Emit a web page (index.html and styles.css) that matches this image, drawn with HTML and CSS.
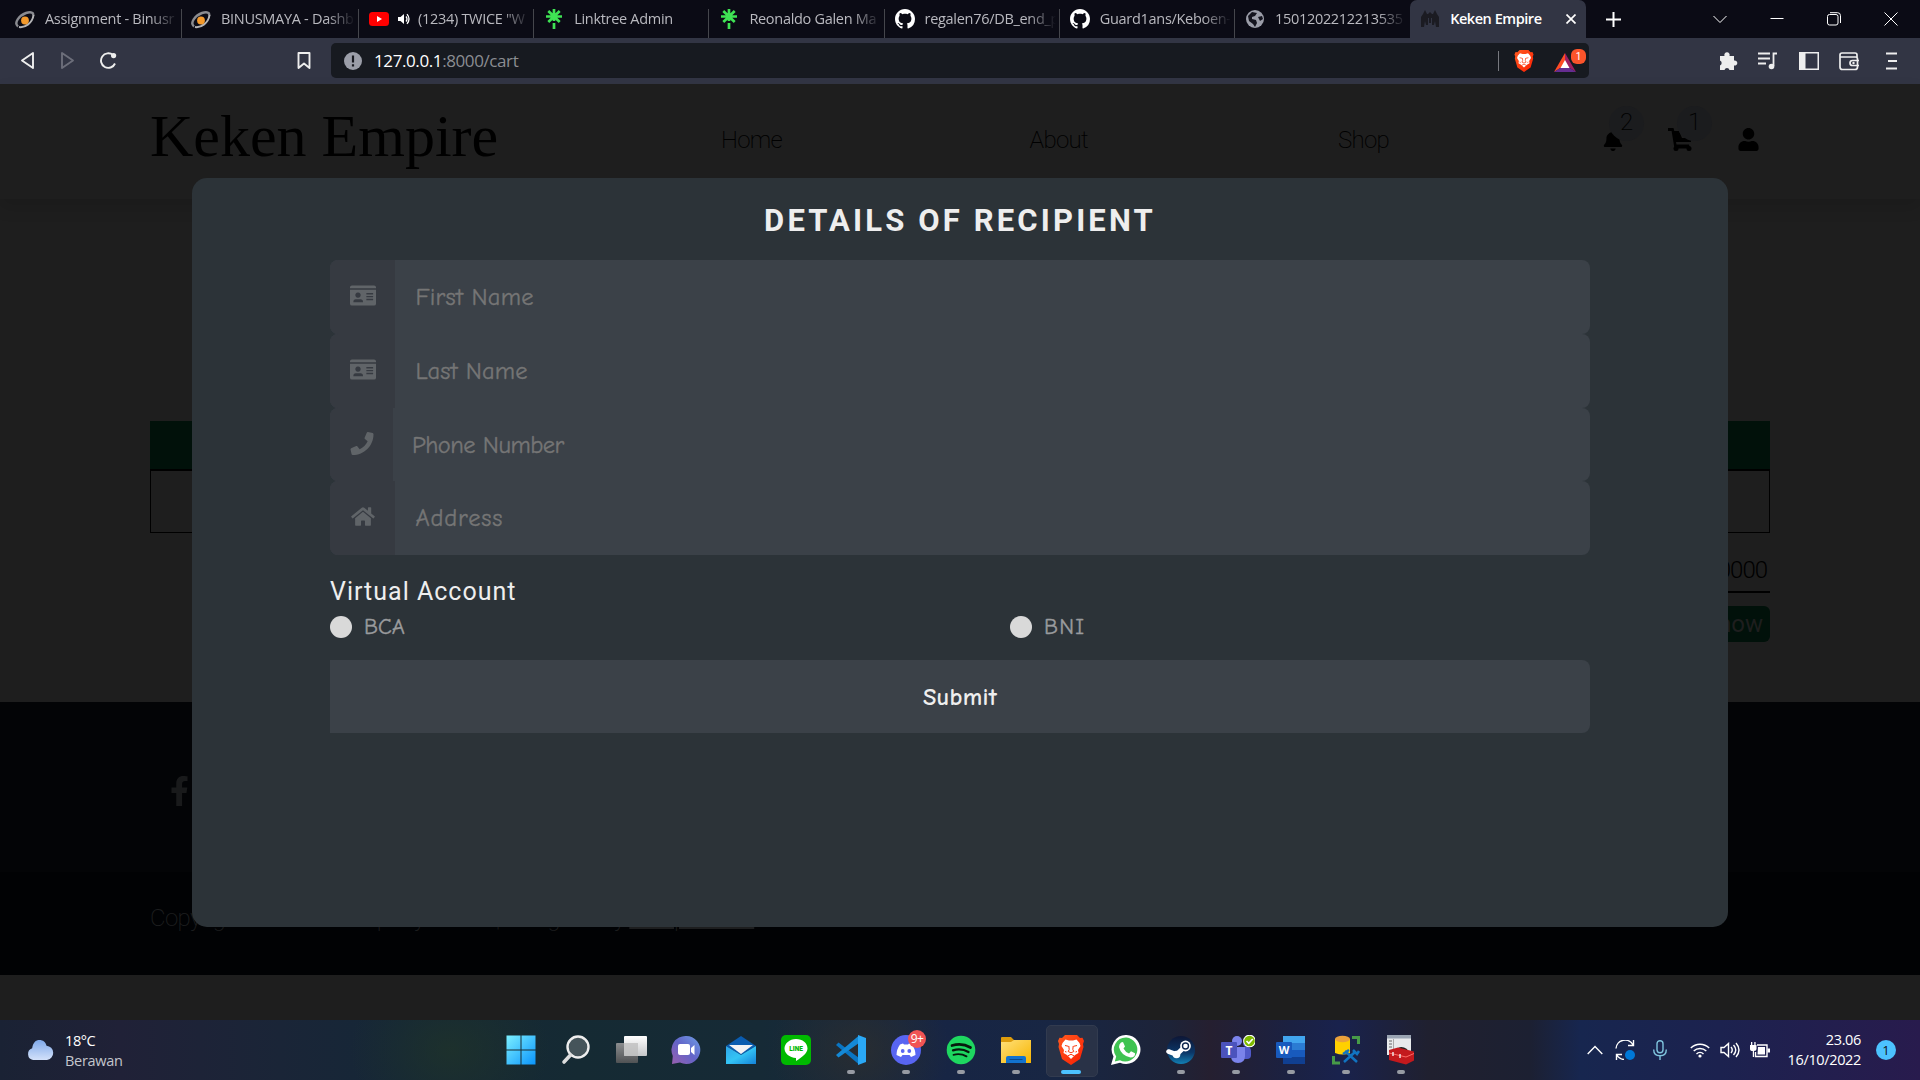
FILE: index.html
```html
<!DOCTYPE html>
<html lang="en">
<head>
<meta charset="utf-8">
<title>Keken Empire</title>
<link rel="stylesheet" href="styles.css">
</head>
<body>
<svg width="0" height="0" class="defs" aria-hidden="true">
  <defs>
    <linearGradient id="gWin" x1="0" y1="0" x2="1" y2="1"><stop offset="0" stop-color="#7cf0ff"/><stop offset="1" stop-color="#0a94fb"/></linearGradient>
    <linearGradient id="gCloud" x1="0" y1="0" x2="0" y2="1"><stop offset="0" stop-color="#7fa9ea"/><stop offset="1" stop-color="#d3e1fa"/></linearGradient>
    <linearGradient id="gChat" x1="0" y1="1" x2="1" y2="0"><stop offset="0" stop-color="#9a5fae"/><stop offset=".5" stop-color="#6264c8"/><stop offset="1" stop-color="#6f9fe6"/></linearGradient>
    <linearGradient id="gMail" x1="0" y1="0" x2="1" y2="1"><stop offset="0" stop-color="#2ea3e8"/><stop offset=".5" stop-color="#34c4f5"/><stop offset="1" stop-color="#1482d8"/></linearGradient>
    <linearGradient id="gFolder" x1="0" y1="0" x2="1" y2="1"><stop offset="0" stop-color="#ffe07a"/><stop offset="1" stop-color="#f7b500"/></linearGradient>
    <linearGradient id="gBrave" x1="0" y1="0" x2="1" y2="1"><stop offset="0" stop-color="#ff5a1f"/><stop offset="1" stop-color="#fb1e02"/></linearGradient>
    <linearGradient id="gSteam" x1="0" y1="0" x2="0" y2="1"><stop offset="0" stop-color="#0d1636"/><stop offset=".6" stop-color="#0b3768"/><stop offset="1" stop-color="#1280b4"/></linearGradient>
    <linearGradient id="gView" x1="0" y1="0" x2="0" y2="1"><stop offset="0" stop-color="#fff"/><stop offset="1" stop-color="#c4c6c8"/></linearGradient>
    <linearGradient id="gBack" x1="0" y1="0" x2="0" y2="1"><stop offset="0" stop-color="#8b8d8f"/><stop offset="1" stop-color="#505254"/></linearGradient>
    <symbol id="binus" viewBox="0 0 20 20"><path d="M3 17.500C-1.500 14 4 6.500 11 4C16 2.500 19 3.500 18 6.500" fill="none" stroke="#8a8b90" stroke-width="2.400"/><path d="M4 18C10 19 17.500 14 18.500 6" fill="none" stroke="#b4b4b6" stroke-width="2"/><circle cx="10" cy="11.500" r="3.900" fill="#f49a2c"/></symbol>
    <symbol id="linktree" viewBox="0 0 20 20"><g stroke="#3fe354" stroke-width="2.700"><path d="M10 0v12M2 7.500h16M4.300 2l11.400 11M15.700 2l-11.400 11M10 14v6"/></g></symbol>
    <symbol id="github" viewBox="0 0 16 16"><path fill="#fff" d="M8 0C3.580 0 0 3.580 0 8c0 3.540 2.290 6.530 5.470 7.590.4.070.55-.17.55-.38 0-.19-.01-.82-.01-1.490-2.010.37-2.530-.49-2.690-.94-.09-.23-.48-.94-.82-1.130-.28-.15-.68-.52-.01-.53.63-.01 1.080.58 1.230.82.72 1.210 1.870.87 2.330.66.070-.52.28-.87.51-1.070-1.780-.2-3.640-.89-3.640-3.950 0-.87.31-1.590.82-2.150-.08-.2-.36-1.020.08-2.120 0 0 .67-.21 2.200.82.64-.18 1.320-.27 2-.27s1.360.09 2 .27c1.530-1.040 2.200-.82 2.200-.82.44 1.100.16 1.920.08 2.120.51.56.82 1.270.82 2.150 0 3.070-1.870 3.750-3.650 3.950.29.25.54.73.54 1.480 0 1.070-.01 1.930-.01 2.200 0 .21.15.46.55.38A8.010 8.010 0 0 0 16 8c0-4.420-3.580-8-8-8z"/></symbol>
    <symbol id="brave" viewBox="0 0 26 30"><path fill="url(#gBrave)" d="M7 0h12l3 3 2.500-.3L26 6l-1 3 .5 3-3.500 12L13 30 4 24 .5 12 1 9 0 6l1.500-3.300L4 3z"/><path fill="#fff" d="M7.500 4.500L11 5.500h4l3.500-1L21.500 8l1 3-2.500 4 .5 3-3.500 2-4 4-4-4-3.500-2 .5-3-2.500-4 1-3z"/><path fill="none" stroke="#fb3a10" stroke-width="1" d="M7 10.500l3.500.8M19 10.500l-3.500.8M10.800 11l.4 3.500-1 2 2.800 1.300 2.800-1.300-1-2 .4-3.500M7 16.500l1.500.5M19 16.500l-1.500.5M10 20.800l3-1.500 3 1.500"/></symbol>
    <symbol id="idcard" viewBox="0 0 27 21"><path fill="#606468" fill-rule="evenodd" d="M2 0h23q2 0 2 2v1H0V2q0-2 2-2zM0 4.400h27V19q0 2-2 2H2q-2 0-2-2zM8.300 7.300a2.800 2.800 0 1 0 .01 0zM3.500 17.500h10q0-3-2.500-3H6q-2.500 0-2.500 3zM17 8h7v1.400h-7zM17 11h7v1.400h-7zM17 14h7v1.400h-7z"/></symbol>
  </defs>
</svg>

<div class="tabstrip">
  <div class="tab first"><svg class="fav"><use href="#binus"/></svg><span class="label">Assignment - Binusr</span></div>
  <div class="tab second"><svg class="fav"><use href="#binus"/></svg><span class="label">BINUSMAYA - Dashb</span></div>
  <div class="tab"><svg class="fav" viewBox="0 0 20 20"><rect y="3" width="20" height="14" rx="3.500" fill="#f00"/><path d="M8 7l5 3-5 3z" fill="#fff"/></svg><svg class="audio" viewBox="0 0 12 12"><path d="M0 4h2.500L6 1v10L2.500 8H0z" fill="#fff"/><path d="M8 3.500q2 2.500 0 5M9 1.200q4 4.800 0 9.600" stroke="#fff" fill="none" stroke-width="1.300"/></svg><span class="label">(1234) TWICE "W</span></div>
  <div class="tab"><svg class="fav"><use href="#linktree"/></svg><span class="label">Linktree Admin</span></div>
  <div class="tab"><svg class="fav"><use href="#linktree"/></svg><span class="label">Reonaldo Galen Ma</span></div>
  <div class="tab"><svg class="fav"><use href="#github"/></svg><span class="label">regalen76/DB_end_p</span></div>
  <div class="tab"><svg class="fav"><use href="#github"/></svg><span class="label">Guard1ans/Keboen-</span></div>
  <div class="tab last"><svg class="fav" viewBox="0 0 20 20"><circle cx="10" cy="10" r="9" fill="#9b9da8"/><path d="M3 7l4-4 5 1-2 3-3 1v2l4 1 1 3-2 4-2-3-4-3zM13 8l4-1 1 3-3 2z" fill="#14141e"/></svg><span class="label">1501202212213535</span></div>
  <div class="tab active"><svg class="fav" viewBox="0 0 20 20"><path fill="#1b1b22" d="M1 18V8l2-3 2-4 2 4h1l2-2 2 2h1l2-4 2 4 2 3v10h-3l-1-6-1 4h-2V9h-1v5H9V9H8v7H6l-1-4-1 6z"/></svg><span class="label">Keken Empire</span><svg class="close" viewBox="0 0 10 10"><path d="M.5.5l9 9M9.500.5l-9 9" stroke="#fff" stroke-width="1.700"/></svg></div>
  <svg class="plus" viewBox="0 0 15 15"><path d="M7.500 0v15M0 7.500h15" stroke="#fff" stroke-width="2"/></svg>
  <div class="winbtns">
    <svg viewBox="0 0 14 14"><path d="M.5 4L7 10.500 13.500 4" /></svg>
    <svg viewBox="0 0 14 14"><path d="M.5 6.500h13"/></svg>
    <svg viewBox="0 0 14 14"><rect x=".5" y="2.500" width="10.500" height="10.500" rx="2"/><path d="M3 .7h7.500q3 0 3 3V11"/></svg>
    <svg viewBox="0 0 14 14"><path d="M.5.5l13 13M13.500.5l-13 13"/></svg>
  </div>
</div>

<div class="toolbar">
  <svg class="nav-ic back" viewBox="0 0 13 17"><path d="M12 1v15L1 8.500z"/></svg>
  <svg class="nav-ic fwd" viewBox="0 0 13 17"><path d="M1 1v15l11-7.500z"/></svg>
  <svg class="nav-ic reload" viewBox="0 0 18 17"><path d="M16 11.500A7.300 7.300 0 1 1 14 3"/><circle cx="14.600" cy="3.600" r="2.600" fill="#eee" stroke="none"/></svg>
  <svg class="nav-ic mark" viewBox="0 0 14 17"><path d="M1.500 1h11v15L7 11.500 1.500 16z"/></svg>
  <div class="address">
    <svg class="info" viewBox="0 0 18 18"><circle cx="9" cy="9" r="9" fill="#9b9ea8"/><path d="M9 3.500v7M9 12.300v2.200" stroke="#17191f" stroke-width="2.200"/></svg>
    <span class="url">127.0.0.1<i>:8000/cart</i></span>
    <span class="sep"></span>
    <svg class="shield"><use href="#brave"/></svg>
    <span class="bat"><svg viewBox="0 0 22 19"><path d="M11 0L0 19 11 12z" fill="#ff4b24"/><path d="M11 0l11 19-11-7z" fill="#9e1f63"/><path d="M0 19h22l-11-7z" fill="#662d91"/><path d="M11 7l4.500 8h-9z" fill="#fff"/></svg><b>1</b></span>
  </div>
  <div class="ext">
    <svg viewBox="0 0 20 20"><path fill="#eee" d="M2 5h4.500a2.700 2.700 0 1 1 5 0H16v4.500a2.600 2.600 0 1 1 0 5V19h-4.500a2.600 2.600 0 0 0-5 0H2v-4.500a2.700 2.700 0 0 0 0-5z"/></svg>
    <svg viewBox="0 0 20 20"><path fill="none" stroke="#eee" stroke-width="1.800" d="M0 2.500h12M0 7.500h12M0 12.500h8M15.500 15V2.500H19"/><circle cx="13.500" cy="15.500" r="2.800" fill="#eee"/></svg>
    <svg viewBox="0 0 20 20"><path fill="#eee" fill-rule="evenodd" d="M0 1h20v18H0zM6.500 2.500v15h12v-15z"/></svg>
    <svg viewBox="0 0 20 20"><g fill="none" stroke="#eee" stroke-width="1.700"><path d="M18 6V4q0-2-2-2H3Q1 2 1 4v12q0 2.500 2.500 2.500H16q2.500 0 2.500-2.500V8q0-2-2-2H1"/><path d="M20 9.500h-6.500a2.500 2.500 0 0 0 0 5H20"/></g><circle cx="14.500" cy="12" r="1.200" fill="#eee"/></svg>
    <svg viewBox="0 0 20 20"><path stroke="#eee" stroke-width="1.800" d="M7 2.500h11M9 10h9M7 17.500h11"/></svg>
  </div>
</div>

<main class="page">
  <header class="site-header">
    <div class="logo">Keken Empire</div>
    <nav><span>Home</span><span>About</span><span>Shop</span></nav>
    <div class="actions">
      <span class="act"><svg class="bell" viewBox="0 0 448 512"><path d="M224 512c35.320 0 63.970-28.650 63.970-64H160.030c0 35.350 28.650 64 63.970 64zm215.390-149.710c-19.320-20.760-55.470-51.990-55.470-154.290 0-77.700-54.480-139.900-127.940-155.160V32c0-17.670-14.320-32-31.980-32s-31.980 14.330-31.980 32v20.840C118.560 68.100 64.080 130.300 64.080 208c0 102.300-36.150 133.530-55.470 154.290-6 6.450-8.660 14.160-8.610 21.710.11 16.400 12.980 32 32.100 32h383.800c19.120 0 32-15.600 32.100-32 .05-7.550-2.610-15.270-8.610-21.710z"/></svg><b>2</b></span>
      <span class="act"><svg class="cart" viewBox="0 0 24 23"><path d="M0 0h5.500l.8 3H11l3 7h4l2 1h3v3H8l.5 2.500H21l1 4H6.500L3.600 3H0z"/><circle cx="8" cy="20.500" r="2.500"/><circle cx="21" cy="20.500" r="2.500"/></svg><b>1</b></span>
      <span class="act"><svg class="user" viewBox="0 0 448 512"><path d="M224 256c70.700 0 128-57.300 128-128S294.700 0 224 0 96 57.300 96 128s57.300 128 128 128zm89.600 32h-16.700c-22.200 10.200-46.900 16-72.900 16s-50.600-5.800-72.900-16h-16.700C60.200 288 0 348.200 0 422.400V464c0 26.500 21.500 48 48 48h352c26.500 0 48-21.500 48-48v-41.600c0-74.200-60.200-134.400-134.400-134.400z"/></svg></span>
    </div>
  </header>
  <section class="cart-list">
    <div class="thead"></div>
    <div class="trow"></div>
    <div class="total">Rp 150000</div>
    <button class="buy">Buy now</button>
  </section>
  <footer>
    <div class="social"><svg viewBox="0 0 320 512"><path d="M279.140 288l14.220-92.660h-88.910v-60.130c0-25.350 12.420-50.060 52.240-50.060h40.420V6.260S260.430 0 225.360 0c-73.220 0-121.080 44.380-121.080 124.720v70.620H22.890V288h81.390v224h100.170V288z"/></svg></div>
    <div class="copy">Copyright © 2021 Company Name | Designed by <u>TemplateMo</u></div>
  </footer>

  <form class="modal">
    <h1>DETAILS OF RECIPIENT</h1>
    <div class="field"><span class="ficon"><svg><use href="#idcard"/></svg></span><span class="ph fn">First Name</span></div>
    <div class="field"><span class="ficon"><svg><use href="#idcard"/></svg></span><span class="ph ln">Last Name</span></div>
    <div class="field phone"><span class="ficon"><svg viewBox="0 0 512 512"><path d="M493.400 24.600l-104-24c-11.300-2.600-22.900 3.300-27.500 13.900l-48 112c-4.200 9.800-1.400 21.300 6.900 28l60.600 49.600c-36 76.700-98.900 140.500-177.200 177.200l-49.600-60.600c-6.800-8.300-18.200-11.100-28-6.900l-112 48C3.900 366.500-2 378.100.6 389.400l24 104C27.100 504.200 36.700 512 48 512c256.100 0 464-207.500 464-464 0-11.200-7.700-20.900-18.600-23.400z"/></svg></span><span class="ph pn">Phone Number</span></div>
    <div class="field"><span class="ficon"><svg viewBox="0 0 576 512"><path d="M280.370 148.260L96 300.110V464a16 16 0 0 0 16 16l112.060-.29a16 16 0 0 0 15.920-16V368a16 16 0 0 1 16-16h64a16 16 0 0 1 16 16v95.640a16 16 0 0 0 16 16.050L464 480a16 16 0 0 0 16-16V300L295.670 148.260a12.190 12.190 0 0 0-15.300 0zM571.600 251.470L488 182.560V44.050a12 12 0 0 0-12-12h-56a12 12 0 0 0-12 12v72.610L318.470 43a48 48 0 0 0-61 0L4.340 251.470a12 12 0 0 0-1.600 16.900l25.500 31A12 12 0 0 0 45.150 301l235.220-193.740a12.190 12.190 0 0 1 15.300 0L530.900 301a12 12 0 0 0 16.900-1.600l25.500-31a12 12 0 0 0-1.700-16.930z"/></svg></span><span class="ph ad">Address</span></div>
    <h2>Virtual Account</h2>
    <div class="radios"><label><i></i>BCA</label><label><i></i>BNI</label></div>
    <button type="button" class="submit">Submit</button>
  </form>
</main>

<div class="taskbar">
  <div class="weather">
    <svg viewBox="0 0 30 23"><path fill="url(#gCloud)" d="M7 23a7 7 0 0 1-1-13.500C7 3 10 0 14.500 0c4 0 7 2.500 8 6.500A8.300 8.300 0 0 1 23 23z"/></svg>
    <div class="wtext"><span>18°C</span><em>Berawan</em></div>
  </div>
  <div class="apps">
    <div class="app"><svg viewBox="0 0 30 30"><path fill="url(#gWin)" d="M.5.5h14v14H.5zM15.500.5h14v14h-14zM.5 15.500h14v14H.5zM15.500 15.500h14v14h-14z"/></svg></div>
    <div class="app"><svg viewBox="0 0 30 30"><circle cx="17" cy="12" r="10.500" fill="#45545a" stroke="#eee" stroke-width="2.400"/><path d="M9.500 20L3 27" stroke="#ddd" stroke-width="3.600" stroke-linecap="round"/></svg></div>
    <div class="app"><svg class="wide" viewBox="0 0 32 30"><rect y="8" width="22" height="20" rx="1" fill="url(#gBack)"/><rect x="8" y="1" width="23" height="20" rx="1" fill="url(#gView)"/><path d="M8 8h14v13H8z" fill="#bcbcbc" opacity=".75"/></svg></div>
    <div class="app"><svg viewBox="0 0 30 30"><path fill="url(#gChat)" d="M15 1a14 14 0 1 1-6 26.500L1 29l.8-8A14 14 0 0 1 15 1z"/><rect x="7" y="9" width="12" height="11" rx="2" fill="#fff"/><path d="M20 13l3.500-3v10L20 17z" fill="#fff"/></svg></div>
    <div class="app"><svg viewBox="0 0 30 30"><path d="M0 11L15 1l15 10-15 9z" fill="#0a5cb0"/><path d="M0 11l15 9 15-9v18H0z" fill="url(#gMail)"/><path d="M3 10h24l-12 9z" fill="#f2f2f4"/></svg></div>
    <div class="app"><svg viewBox="0 0 30 30"><rect width="30" height="30" rx="5" fill="#00b900"/><path fill="#fff" d="M15 4c6.500 0 11.500 4 11.500 9.500 0 5-6 9-11.500 12.500v-3C8.500 22.500 3.500 18.500 3.500 13.500S8.500 4 15 4z"/><text x="15" y="16" text-anchor="middle" font-family="Roboto" font-weight="900" font-size="6.500" fill="#00b900">LINE</text></svg></div>
    <div class="app run"><svg viewBox="0 0 30 30"><path fill="#0a75c2" d="M0 10l2.500-2.500L23 23v6.500L0 10z"/><path fill="#1489d6" d="M0 20l2.500 2.500L23 8V.5L0 20z"/><path fill="#2aa8f5" d="M22 0l8 3v24l-8 3z"/></svg></div>
    <div class="app run"><svg viewBox="0 0 30 30"><circle cx="15" cy="15" r="15" fill="#5865f2"/><path fill="#fff" d="M9 9.500l3-1 1 1h4l1-1 3 1q3.500 5 3.500 10.500l-4.500 2-1.500-2h-7l-1.500 2-4.500-2Q5.500 14.500 9 9.500z"/><ellipse cx="11.700" cy="16" rx="1.900" ry="2.100" fill="#5865f2"/><ellipse cx="18.300" cy="16" rx="1.900" ry="2.100" fill="#5865f2"/></svg><b class="cnt">9+</b></div>
    <div class="app run"><svg viewBox="0 0 30 30"><circle cx="15" cy="15" r="14.300" fill="#1ed760"/><g fill="none" stroke="#071a0d" stroke-linecap="round"><path stroke-width="2.700" d="M6 10.500q10-3 18.500 2"/><path stroke-width="2.300" d="M7 15.300q8.500-2.300 15.500 1.700"/><path stroke-width="1.900" d="M7.500 19.800q7-1.800 13 1.500"/></g></svg></div>
    <div class="app run"><svg viewBox="0 0 30 30"><path fill="#dd9c0c" d="M0 3q0-1 1-1h9l3 3h16v8H0z"/><path fill="url(#gFolder)" d="M0 7h10l3-2h17v23H0z"/><path fill="#1273cf" d="M5 28v-5q0-2 2-2h16q2 0 2 2v5z"/><path d="M8.500 24.500h13" stroke="#0a4a8d"/></svg></div>
    <div class="app run on"><svg><use href="#brave"/></svg></div>
    <div class="app"><svg viewBox="0 0 30 30"><path fill="#fff" d="M15.500 0A14.500 14.500 0 1 1 9 27.700L0 30l2.500-8.500A14.500 14.500 0 0 1 15.500 0z"/><path fill="#3fc351" d="M15.500 2.500A12 12 0 1 1 9 25.200L3.800 26.500l1.400-5A12 12 0 0 1 15.500 2.500z"/><path fill="#fff" d="M10 7.500l2-.5 2 4.500-1.500 2q2 3.700 5.500 5l2-2.300 4 2q.5 4-4.500 4.300Q10 20.500 8 12q0-3 2-4.500z"/></svg></div>
    <div class="app run"><svg viewBox="0 0 30 30"><circle cx="15" cy="15" r="14" fill="url(#gSteam)"/><path d="M2.500 16.500l8 3 9-8.500" stroke="#fff" stroke-width="4.600" fill="none" stroke-linecap="round"/><circle cx="10.500" cy="19.500" r="3.800" fill="#fff"/><circle cx="19.500" cy="11" r="5.400" fill="#fff"/><circle cx="19.500" cy="11" r="3" fill="none" stroke="#12284f" stroke-width="1.400"/></svg></div>
    <div class="app run"><svg class="teams" viewBox="0 0 34 30"><circle cx="26" cy="8" r="4" fill="#5059c9"/><rect x="20" y="12" width="10" height="12" rx="4" fill="#5059c9"/><circle cx="16" cy="6" r="5" fill="#7b83eb"/><path d="M10 12h14v9q0 7-7 7t-7-7z" fill="#7b83eb"/><rect y="7" width="16" height="16" rx="1" fill="#4b53bc"/><text x="8" y="19.500" text-anchor="middle" font-family="Open Sans" font-weight="700" font-size="12" fill="#fff">T</text><circle cx="28.500" cy="6" r="6.300" fill="#fff"/><circle cx="28.500" cy="6" r="5.300" fill="#7fba00"/><path d="M25.500 6l2.300 2.300L31.700 4" stroke="#fff" stroke-width="1.700" fill="none"/></svg></div>
    <div class="app run"><svg viewBox="0 0 30 30"><path fill="#41a5ee" d="M7 1h22v7H7z"/><path fill="#2b7cd3" d="M7 8h22v7H7z"/><path fill="#185abd" d="M7 15h22v7H7z"/><path fill="#103f91" d="M7 22h22v7H7z"/><rect y="7" width="16" height="16" rx="1" fill="#185abd"/><text x="8" y="19" text-anchor="middle" font-family="Open Sans" font-weight="700" font-size="11" fill="#fff">W</text></svg></div>
    <div class="app run"><svg viewBox="0 0 30 30"><path fill="#ffd000" d="M4 4h15v14q-7 3-15 0z"/><ellipse cx="11.500" cy="4" rx="7.500" ry="3.200" fill="#e9a13b"/><path d="M21 2.500h6.500V9M2.500 21v7H9" stroke="#479a48" stroke-width="3" fill="none"/><path d="M13 27l11-10M14 16l12 11M12 19l6-4M22 15l4 4 2-3" stroke="#1173c0" stroke-width="2.500" fill="none"/></svg></div>
    <div class="app run"><svg viewBox="0 0 30 30"><path fill="#e8eaec" d="M1 0h24v20H1z"/><path fill="#9aa4b2" d="M1 0h24v3.500H1z"/><path d="M3 6h3M3 9h3M3 12h3" stroke="#666"/><path d="M7.500 4v12" stroke="#aaa"/><path d="M12 15q2-4 9 0" fill="none" stroke="#222" stroke-width="1.800"/><path fill="#c3191d" d="M3 15l9-2.500 16 4v9l-8 4L3 25z"/><path d="M3 18l17 4 8-3.500" stroke="#ff6a65" fill="none"/><path d="M7 17v4M14 19v4" stroke="#eee" stroke-width="1.400"/></svg></div>
  </div>
  <div class="tray">
    <svg class="t-up" viewBox="0 0 16 10"><path d="M.7 9L8 1.500 15.300 9"/></svg>
    <svg class="t-sync" viewBox="0 0 20 20"><path d="M1 8.500A9 9 0 0 1 18 5M18.500 0v5.500H13M7 14.500H1.500V20M2 15q2 4 7 4.500"/><circle cx="15" cy="15" r="5" fill="#0078d7" stroke="none"/></svg>
    <svg class="t-mic" viewBox="0 0 14 20"><g stroke="#7fc4dd"><rect x="4" y=".7" width="6" height="12" rx="3"/><path d="M.7 9.500q0 6.300 6.300 6.300t6.300-6.300M7 16v4"/></g></svg>
    <svg class="t-wifi" viewBox="0 0 20 16"><path d="M.8 6a13 13 0 0 1 18.400 0M3.700 9a9 9 0 0 1 12.600 0M6.500 12a5 5 0 0 1 7 0"/><circle cx="10" cy="14" r="1.600" fill="#fff" stroke="none"/></svg>
    <svg class="t-vol" viewBox="0 0 20 16"><path d="M1 5.500h3L8.500 1.500v13L4 10.500H1zM11 5q2.500 3 0 6M13.500 3q4.500 5 0 10M16 1q6 7 0 14"/></svg>
    <svg class="t-bat" viewBox="0 0 20 16"><path d="M7 3h10v11.500H5.500V10"/><path d="M8 5h7v7.500H7.500zM17.500 6.500H20v4h-2.500zM0 3h6.500v4Q6.500 9 4 9v6H2.800V9Q0 9 0 7zM1 0h1.300v3H1zM4.300 0h1.300v3H4.300z" fill="#fff" stroke="none"/></svg>
    <div class="clock"><span>23.06</span><span>16/10/2022</span></div>
    <b class="note">1</b>
  </div>
</div>
</body>
</html>
```
FILE: styles.css
```css
* { box-sizing: border-box; }
body { margin: 0; width: 1920px; height: 1080px; overflow: hidden; background: #1e1e1e; font-family: "Open Sans", "Noto Sans", sans-serif; }
.defs { position: absolute; }
svg { flex: none; display: block; }

.tabstrip { height: 38px; background: #0b0b15; display: flex; align-items: center; }
.tab { width: 175.200px; height: 38px; display: flex; align-items: center; padding: 0 4px 0 10px; flex: none; font-size: 14.500px; letter-spacing: -.3px; color: #b9b9bf; background: linear-gradient(#45464c, #45464c) right bottom / 1px 29px no-repeat; }
.tab.first { width: 182px; padding-left: 15px; }
.tab.second { width: 177px; padding-left: 9px; }
.tab.last { background: none; }
.fav { width: 20px; height: 20px; margin-right: 10px; }
.audio { width: 12px; height: 12px; margin: 0 8px 0 -1px; }
.label { flex: 1; overflow: hidden; white-space: nowrap; line-height: 20px; -webkit-mask-image: linear-gradient(to right, #000 calc(100% - 28px), transparent); mask-image: linear-gradient(to right, #000 calc(100% - 28px), transparent); }
.tab.active { width: 176px; background: #323544; border-radius: 7px 7px 0 0; color: #fff; font-weight: 600; letter-spacing: -.45px; padding-right: 10px; }
.active .label { -webkit-mask-image: none; mask-image: none; }
.close { width: 10px; height: 10px; }
.plus { width: 15px; height: 15px; margin-left: 20px; }
.winbtns { display: flex; gap: 43px; margin-left: auto; margin-right: 22px; }
.winbtns svg { width: 14px; height: 14px; fill: none; stroke: #fff; stroke-width: 1; }

.toolbar { height: 46px; padding-bottom: 1px; background: #323544; display: flex; align-items: center; }
.nav-ic { fill: none; stroke: #eee; stroke-width: 1.900; stroke-linejoin: round; height: 17px; }
.back { width: 13px; margin-left: 21px; }
.fwd { width: 13px; margin-left: 27px; stroke: #6c6e7a; }
.reload { width: 18px; margin-left: 25px; }
.mark { width: 14px; margin-left: 180px; }
.address { width: 1258px; height: 35px; margin-left: 20px; background: #171a20; border-radius: 5px; display: flex; align-items: center; padding: 0 3px 0 13px; }
.info { width: 18px; height: 18px; }
.url { flex: 1; margin-left: 12px; font-size: 17px; letter-spacing: -.4px; color: #fff; line-height: 24px; }
.url i { font-style: normal; color: #8b8d92; }
.sep { width: 1px; height: 20px; background: #77797f; }
.shield { width: 20px; height: 22px; margin-left: 15px; }
.bat { margin-left: 20px; width: 32px; height: 22px; display: flex; align-items: flex-end; position: relative; }
.bat svg { width: 22px; height: 19px; }
.bat b { position: absolute; left: 17px; top: -1px; width: 15px; height: 15px; border-radius: 6px; background: #fb542b; color: #fff; font: 10px/15px Roboto, sans-serif; text-align: center; }
.ext { display: flex; gap: 20.300px; margin-left: 129px; }
.ext svg { width: 20px; height: 20px; }

.page { height: 936px; background: #1e1e1e; position: relative; color: #000; font-family: Roboto, sans-serif; }
.site-header { height: 115px; display: flex; padding: 0 150px; box-shadow: 0 8px 16px rgba(0, 0, 0, .12); font-size: 24px; position: relative; }
.logo { flex: none; width: 571px; font: 400 60px/69px "Liberation Serif", serif; padding-top: 18px; white-space: nowrap; }
.site-header nav { flex: none; display: flex; width: 881px; padding-top: 41px; line-height: 30px; font-weight: 200; letter-spacing: -.7px; }
.site-header nav span { width: 308.500px; flex: none; }
.actions { display: flex; padding-top: 44px; }
.act { position: relative; width: 67px; height: 24px; flex: none; }
.act svg { height: 23px; }
.act .bell { width: 20px; height: 21px; margin-top: 2px; margin-left: 1px; }
.act .cart { width: 24px; margin-left: -1px; }
.act .user { width: 21px; margin-left: 2px; }
.act b { position: absolute; left: 7px; top: -22px; width: 35px; height: 35px; border-radius: 50%; background: #1b1c1e; text-align: center; font-weight: 200; line-height: 33px; }
.act:nth-child(2) b { left: 8px; }
.cart-list { height: 503px; padding: 222px 150px 0; display: flex; flex-direction: column; }
.thead { height: 50px; background: #01110a; border-bottom: 2px solid #000; }
.trow { height: 62px; border: 1px solid #000; border-top: 0; }
.total { align-self: flex-end; width: 540px; height: 60px; border-bottom: 2px solid #000; text-align: right; font-size: 24px; font-weight: 300; line-height: 74px; padding-right: 3px; letter-spacing: -1px; }
.buy { align-self: flex-end; margin-top: 13px; width: 120px; height: 36px; border: 0; border-radius: 6px; background: #01110a; color: #1e1e1e; font: 400 24px/36px Roboto, sans-serif; padding: 0 7px; text-align: right; white-space: nowrap; }
footer { height: 273px; background: #030406; padding: 74px 150px 0; }
.social { height: 96px; padding-left: 20px; }
.social svg { width: 19px; height: 30px; fill: #191a1b; }
.copy { margin: 0 -150px; height: 103px; padding: 31px 150px 0; background: #010204; color: #1d1e1f; font-size: 24px; line-height: 30px; font-weight: 200; letter-spacing: -.68px; }
.copy u { text-decoration-thickness: 2px; }

.modal { position: absolute; left: 192px; top: 94px; width: 1536px; height: 749px; padding: 0 138px; background: #2c3338; border-radius: 15px; font-family: "Comic Sans MS", "Comic Neue", Lato, sans-serif; }
.modal h1 { margin: 0; height: 82px; padding-top: 23px; text-align: center; color: #eee; font: 700 31px/40px Roboto, sans-serif; letter-spacing: 3.150px; }
.field { height: 73.750px; display: flex; background: #3b4148; border-radius: 8px; overflow: hidden; align-items: center; font-size: 24.500px; color: #757575; -webkit-text-stroke: .35px #757575; }
.ficon { width: 65px; height: 100%; background: #363a41; display: flex; align-items: center; padding: 0 0 3px 20px; }
.ficon svg { width: 26px; height: 21px; fill: #606468; }
.phone .ficon { width: 63px; padding-bottom: 1px; }
.phone .ficon svg { width: 24px; height: 23px; }
.ph { padding-left: 20.500px; line-height: 30px; }
.phone .ph { padding: 1px 0 0 19px; }
.fn { letter-spacing: .2px; }
.ln { letter-spacing: .1px; }
.pn { letter-spacing: -.5px; }
.ad { letter-spacing: .8px; }
.modal h2 { margin: 0; height: 60px; padding-top: 21px; color: #eee; font: 400 25px/32px Roboto, sans-serif; letter-spacing: 1px; }
.radios { display: flex; height: 45px; color: #9a9b9d; font-size: 22.500px; -webkit-text-stroke: .35px #9a9b9d; }
.radios label { flex: none; width: 680px; display: flex; height: 23px; align-items: center; gap: 12px; }
.radios label:last-child { width: 200px; letter-spacing: 1.200px; }
.radios i { width: 22px; height: 22px; border-radius: 50%; background: #d9d9d9; }
.submit { display: block; width: 100%; height: 73px; border: 0; padding: 0; border-radius: 0 8px 8px 0; background: #3b4148; color: #eee; font: 700 24.500px/74px "Comic Sans MS", "Comic Neue", Lato, sans-serif; letter-spacing: .3px; }

.taskbar { height: 60px; display: flex; color: #fff; background: radial-gradient(ellipse 100px 80px at 450px 30px, rgba(34, 54, 38, .6), transparent), radial-gradient(ellipse 90px 80px at 860px 30px, rgba(44, 46, 46, .8), transparent), linear-gradient(90deg, #1a2234 0, #202137 120px, #1a2537 280px, #152737 400px, #152a33 580px, #162a36 760px, #172544 940px, #182643 1060px, #1d2338 1170px, #251f30 1210px, #1b2142 1290px, #19224d 1340px, #20202f 1430px, #1c2032 1530px, #17264f 1580px, #1c224f 1720px, #281b4d 1920px); }
.weather { width: 493px; padding-left: 25px; display: flex; align-items: center; flex: none; }
.weather svg { width: 30px; height: 20px; }
.wtext { margin-left: 10px; padding-top: 1px; display: flex; flex-direction: column; font-size: 14.500px; line-height: 20px; letter-spacing: -.4px; }
.wtext em { font-style: normal; color: #c3c6cc; letter-spacing: -.3px; }
.apps { display: flex; flex: none; }
.app { width: 55px; height: 60px; position: relative; display: flex; justify-content: center; padding-top: 15px; }
.app svg { width: 30px; height: 30px; position: relative; }
.app svg.wide { width: 32px; margin-left: 3px; }
.app svg.teams { width: 34px; margin-left: 4px; }
.app.run::after { content: ""; position: absolute; left: 24px; top: 50px; width: 8px; height: 4px; border-radius: 2px; background: #979ba3; }
.app.on::before { content: ""; position: absolute; left: 3px; top: 5px; width: 50px; height: 50px; border-radius: 5px; background: #293247; border: 1px solid #323b4f; }
.app.on::after { left: 18px; width: 20px; background: #4cc2ff; }
.cnt { position: absolute; left: 30px; top: 10px; width: 18px; height: 18px; border-radius: 50%; background: #f15454; font: 400 12px/18px "Open Sans", sans-serif; text-align: center; letter-spacing: -.5px; }
.tray { flex: 1; display: flex; align-items: center; padding-left: 159px; }
.tray svg { fill: none; stroke: #fff; stroke-width: 1.400; }
.t-up { width: 16px; height: 10px; }
.t-sync { width: 20px; height: 20px; margin-left: 12px; }
.t-mic { width: 14px; height: 20px; margin-left: 18px; }
.t-wifi { width: 20px; height: 16px; margin-left: 23px; }
.t-vol { width: 20px; height: 16px; margin-left: 10px; }
.t-bat { width: 20px; height: 16px; margin-left: 10px; }
.clock { width: 91px; display: flex; flex-direction: column; text-align: right; font-size: 14.500px; line-height: 20px; letter-spacing: -.35px; }
.note { width: 20px; height: 20px; margin-left: 15px; border-radius: 50%; background: #4cc2ff; color: #111; font: 400 13px/20px "Open Sans", sans-serif; text-align: center; }
```
